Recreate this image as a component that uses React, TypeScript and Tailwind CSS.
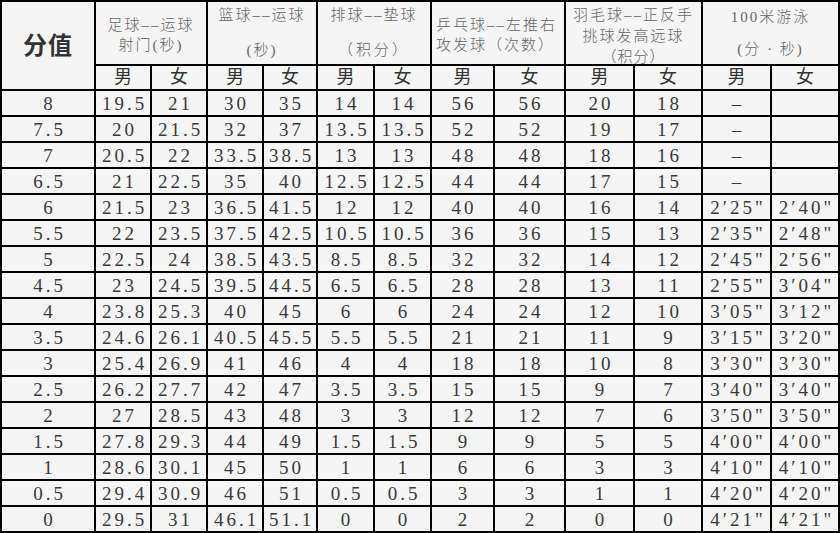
import React from "react";

const rows: string[][] = [
  ["8", "19.5", "21", "30", "35", "14", "14", "56", "56", "20", "18", "–", ""],
  ["7.5", "20", "21.5", "32", "37", "13.5", "13.5", "52", "52", "19", "17", "–", ""],
  ["7", "20.5", "22", "33.5", "38.5", "13", "13", "48", "48", "18", "16", "–", ""],
  ["6.5", "21", "22.5", "35", "40", "12.5", "12.5", "44", "44", "17", "15", "–", ""],
  ["6", "21.5", "23", "36.5", "41.5", "12", "12", "40", "40", "16", "14", "2′25\"", "2′40\""],
  ["5.5", "22", "23.5", "37.5", "42.5", "10.5", "10.5", "36", "36", "15", "13", "2′35\"", "2′48\""],
  ["5", "22.5", "24", "38.5", "43.5", "8.5", "8.5", "32", "32", "14", "12", "2′45\"", "2′56\""],
  ["4.5", "23", "24.5", "39.5", "44.5", "6.5", "6.5", "28", "28", "13", "11", "2′55\"", "3′04\""],
  ["4", "23.8", "25.3", "40", "45", "6", "6", "24", "24", "12", "10", "3′05\"", "3′12\""],
  ["3.5", "24.6", "26.1", "40.5", "45.5", "5.5", "5.5", "21", "21", "11", "9", "3′15\"", "3′20\""],
  ["3", "25.4", "26.9", "41", "46", "4", "4", "18", "18", "10", "8", "3′30\"", "3′30\""],
  ["2.5", "26.2", "27.7", "42", "47", "3.5", "3.5", "15", "15", "9", "7", "3′40\"", "3′40\""],
  ["2", "27", "28.5", "43", "48", "3", "3", "12", "12", "7", "6", "3′50\"", "3′50\""],
  ["1.5", "27.8", "29.3", "44", "49", "1.5", "1.5", "9", "9", "5", "5", "4′00\"", "4′00\""],
  ["1", "28.6", "30.1", "45", "50", "1", "1", "6", "6", "3", "3", "4′10\"", "4′10\""],
  ["0.5", "29.4", "30.9", "46", "51", "0.5", "0.5", "3", "3", "1", "1", "4′20\"", "4′20\""],
  ["0", "29.5", "31", "46.1", "51.1", "0", "0", "2", "2", "0", "0", "4′21\"", "4′21\""],
];

const cell = "bg-[#f5f5f5] flex items-center justify-center";
const head =
  "bg-[#f5f5f5] col-span-2 flex flex-col items-center text-[15px] leading-[20px] tracking-[2px] font-light text-[#666]";

export default function App() {
  return (
    <div
      className="w-[840px] h-[533px] bg-black p-[2px] grid gap-[2px] grid-cols-[92px_54px_54px_54px_52px_55px_55px_61px_69px_67px_66px_67px_66px] grid-rows-[62px_23px_repeat(17,24px)]"
      style={{ fontFamily: '"Liberation Serif", "Noto Sans CJK SC", serif' }}
    >
      <div className={`${cell} row-span-2 text-[24px] font-bold text-[#333] tracking-[1px]`}>
        分值
      </div>
      <div className={`${head} justify-center pt-[4px]`}>
        <span>足球––运球</span>
        <span>射门(秒)</span>
      </div>
      <div className={`${head} pt-[3px]`}>
        <span>篮球––运球</span>
        <span className="text-[7px] leading-[8px] text-[#ccc] tracking-[8px]">· ·</span>
        <span className="mt-[7px]">(秒)</span>
      </div>
      <div className={`${head} pt-[3px]`}>
        <span>排球––垫球</span>
        <span className="text-[7px] leading-[8px] text-[#ccc] tracking-[8px]">· ·</span>
        <span className="mt-[7px] tracking-[3px]">（积分）</span>
      </div>
      <div className={`${head} justify-center pt-[4px] items-start pl-[4px]`}>
        <span className="tracking-[2px]">乒乓球––左推右</span>
        <span className="tracking-[2px]">攻发球（次数）</span>
      </div>
      <div className={`${head} pt-[3px] leading-[21px]`}>
        <span className="tracking-[2px]">羽毛球––正反手</span>
        <span className="tracking-[2px]">挑球发高远球</span>
        <span className="tracking-[1px]">（积分）</span>
      </div>
      <div className={`${head} pt-[5px]`}>
        <span>100米游泳</span>
        <span className="mt-[12px]">(分 · 秒)</span>
      </div>
      {Array.from({ length: 6 }).flatMap((_, i) => [
        <div key={`m${i}`} className={`${cell} text-[18px] text-[#333]`}>男</div>,
        <div key={`f${i}`} className={`${cell} text-[18px] text-[#333]`}>女</div>,
      ])}
      {rows.flatMap((r, ri) =>
        r.map((v, ci) => (
          <div
            key={`${ri}-${ci}`}
            className={`${cell} text-[19px] leading-none text-[#3a3a3a] tracking-[3px] pl-[3px]`}
          >
            {v}
          </div>
        ))
      )}
    </div>
  );
}
